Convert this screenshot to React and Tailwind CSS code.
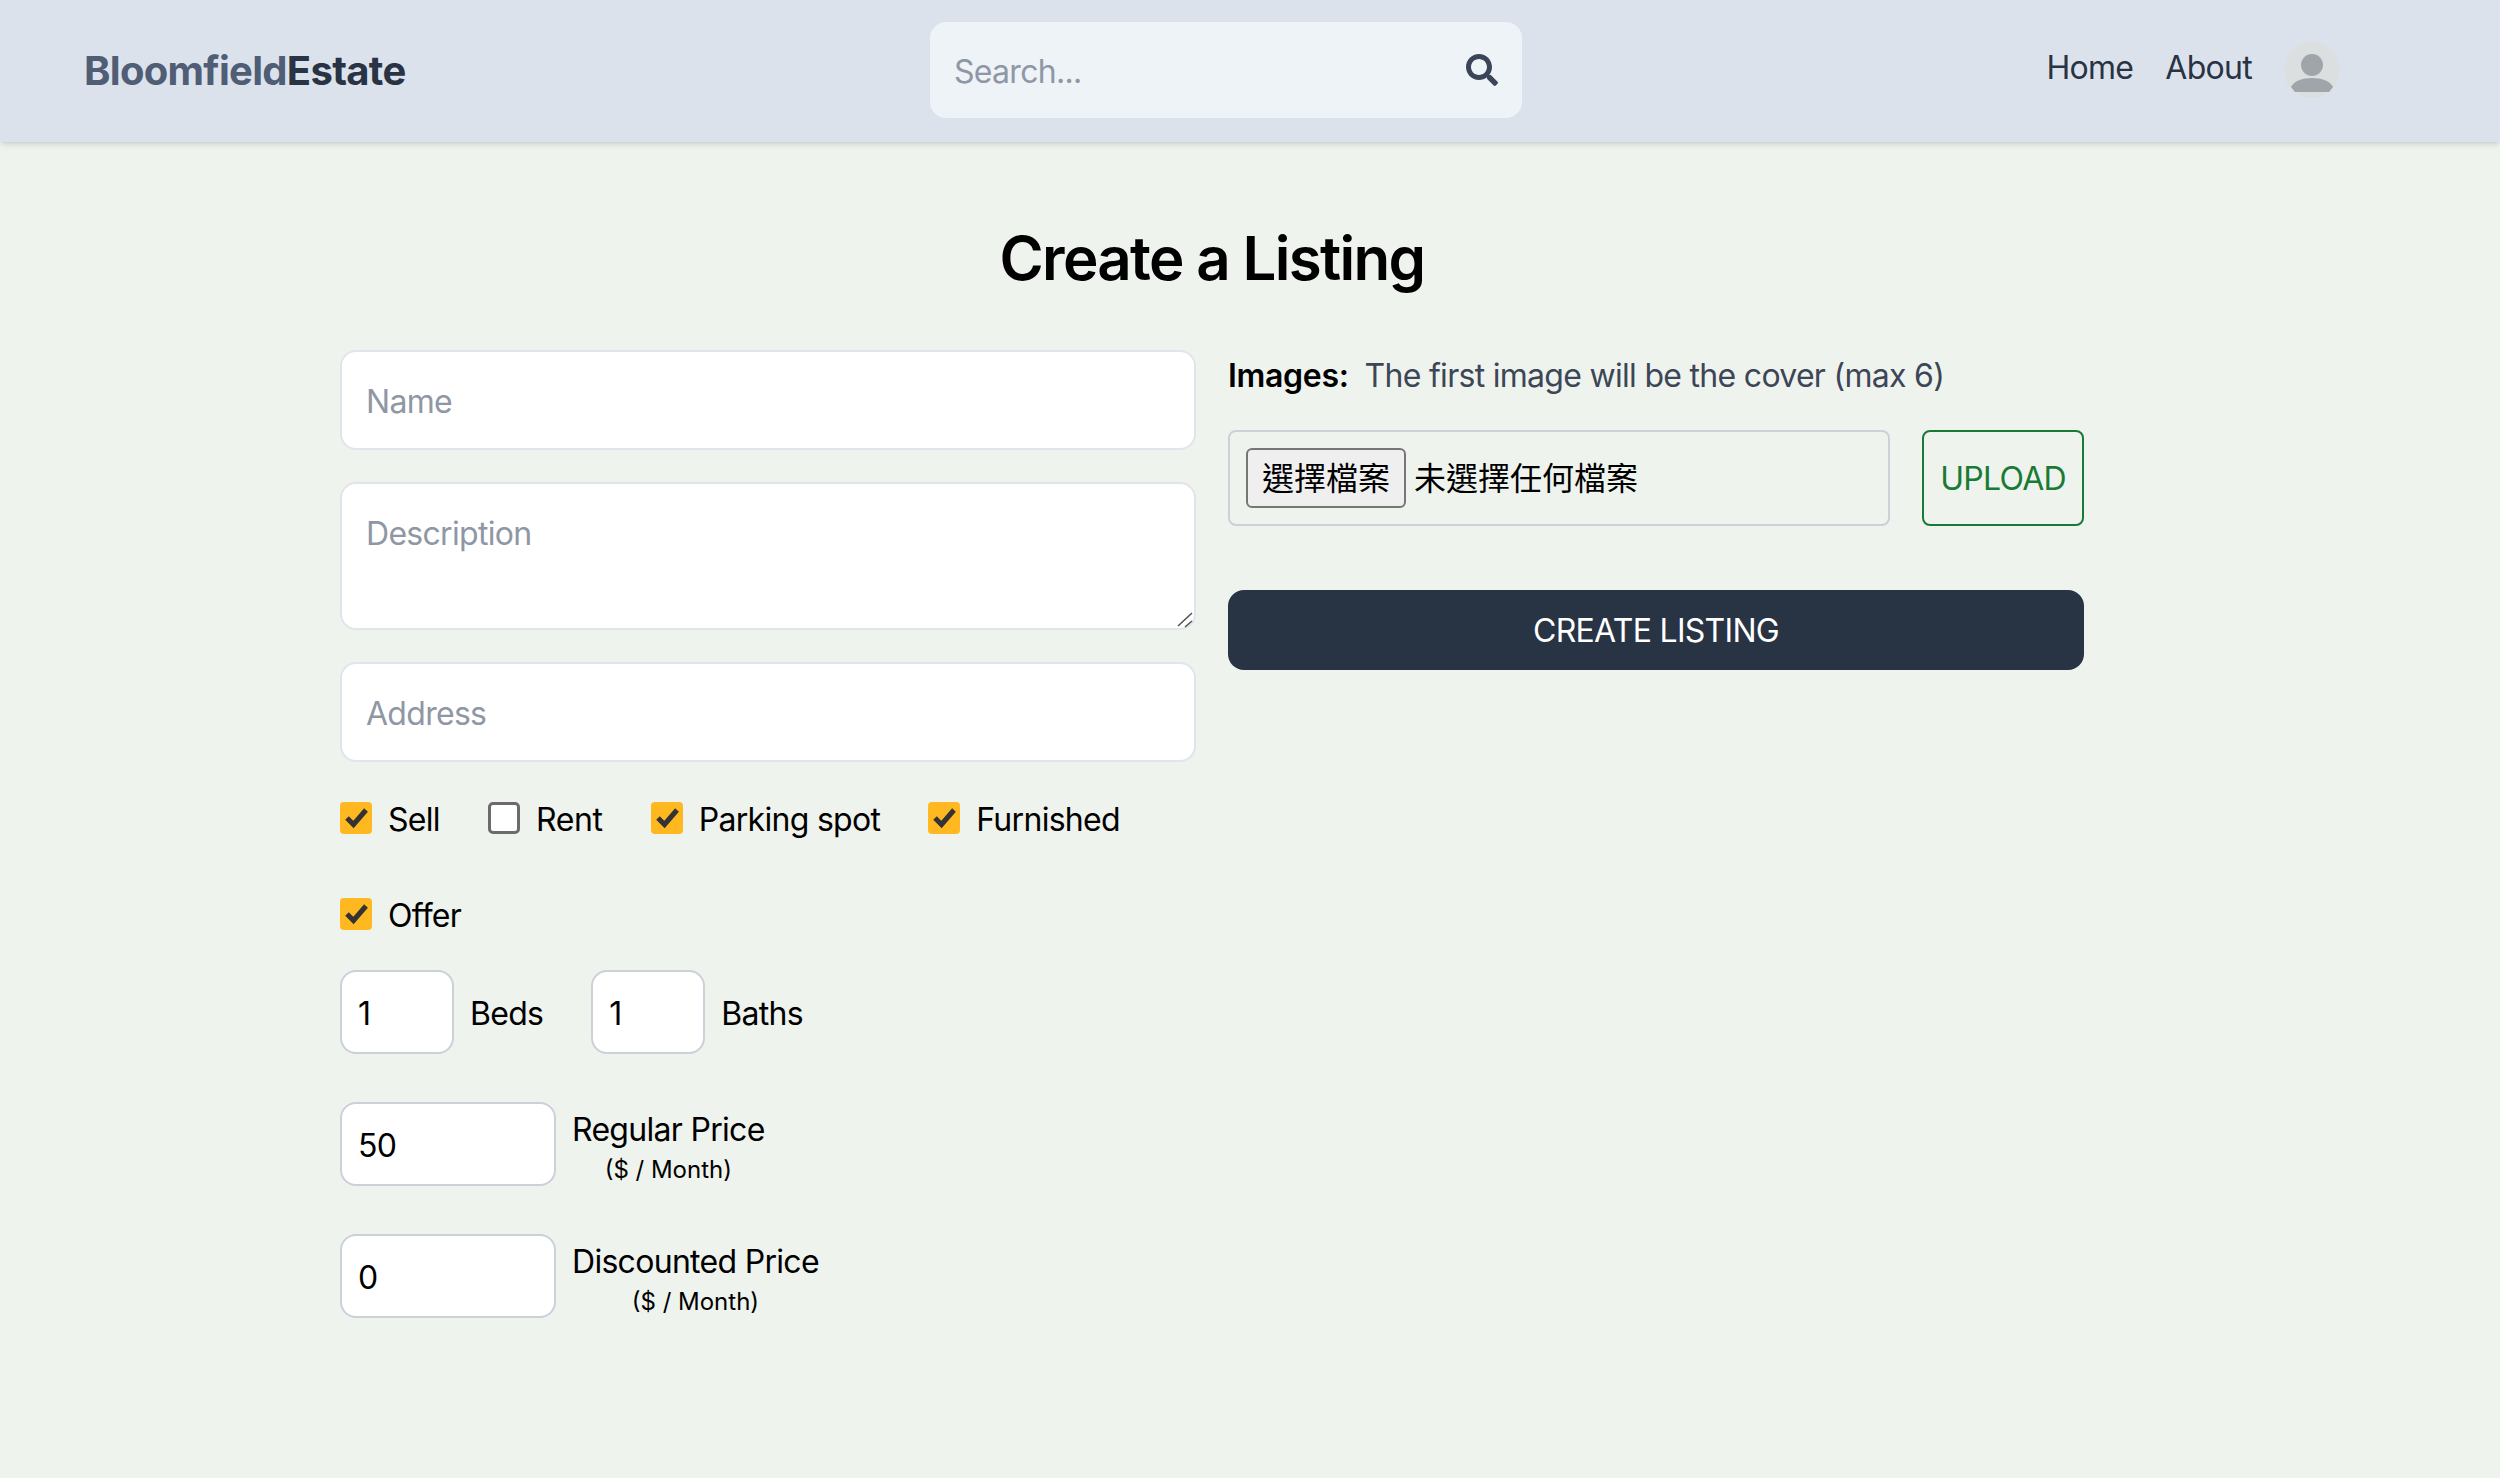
import { FaSearch } from 'react-icons/fa'

const field = 'w-full h-[100px] bg-white border-2 border-[#e1e4ea] rounded-2xl px-6 pt-[2px] text-[32px] text-black outline-none placeholder:text-[#8f97a5]'
const numberField = 'h-[84px] bg-white border-2 border-[#cbd0d9] rounded-2xl px-4 pt-[2px] text-[32px] text-black outline-none'

function Check({ label, checked, labelClass = '' }) {
  return (
    <label className="flex items-center gap-4 h-12">
      <span className="relative w-8 h-8">
        <input
          type="checkbox"
          defaultChecked={checked}
          className="block w-8 h-8 m-0 appearance-none rounded-[5px] bg-white border-[3px] border-[#6b6b6b] checked:bg-[#ffb81f] checked:border-0 checked:rounded"
        />
        {checked && (
          <svg viewBox="0 0 32 32" className="absolute inset-0 w-8 h-8">
            <path d="M7 16l6.5 6.5L26 8" fill="none" stroke="#333" strokeWidth="5" />
          </svg>
        )}
      </span>
      <span className={`pt-[3px] ${labelClass}`}>{label}</span>
    </label>
  )
}

function PriceField({ value, label }) {
  return (
    <div className="flex items-center gap-4">
      <input type="number" defaultValue={value} className={`${numberField} w-[216px]`} />
      <div className="flex flex-col items-center pt-[3px]">
        <p>{label}</p>
        <span className="text-2xl leading-8 tracking-normal">($ / Month)</span>
      </div>
    </div>
  )
}

export default function App() {
  return (
    <div className="min-h-screen bg-[#eff3ee] font-['Inter','Noto_Sans_CJK_TC',sans-serif] text-[32px] leading-[48px] tracking-[-0.022em] text-black">
      <header className="bg-[#dce2ec] shadow-md">
        <div className="w-[2424px]">
          <div className="w-[2304px] mx-auto flex justify-between items-center px-6 pt-[22px] pb-6">
            <h1 className="font-bold text-[40px] leading-[56px] tracking-[-0.7px] pt-[2px]">
              <span className="text-[#4f5d75]">Bloomfield</span>
              <span className="text-[#283344]">Estate</span>
            </h1>
            <form className="flex items-center bg-[#eef3f8] rounded-2xl p-6">
              <input placeholder="Search..." className="w-[512px] h-12 pt-[3px] bg-transparent outline-none text-[32px] placeholder:text-[#8f97a5]" />
              <FaSearch className="w-8 h-8 text-[#3a4558]" />
            </form>
            <nav className="flex items-center gap-8 text-[#283344]">
              <a className="-mt-1">Home</a>
              <a className="-mt-1">About</a>
              <svg viewBox="0 0 56 56" className="w-14 h-14">
                <circle cx="28" cy="28" r="28" fill="#dcdfe0" />
                <circle cx="28" cy="23" r="11" fill="#9fa5a8" />
                <path d="M7 45c3-6 11-9 21-9s18 3 21 9l-4 5H11z" fill="#9fa5a8" />
              </svg>
            </nav>
          </div>
        </div>
      </header>

      <div className="w-[2424px]">
        <main className="w-[1792px] mx-auto p-6">
          <h2 className="text-[60px] leading-[72px] font-semibold tracking-[-0.028em] text-center my-14">Create a Listing</h2>
          <form className="flex gap-8">
            <div className="flex-1 flex flex-col gap-8">
              <input placeholder="Name" className={field} />
              <div className="relative">
                <textarea placeholder="Description" className={`${field} h-[148px] pt-[26px] block leading-[48px] resize-none`} />
                <svg viewBox="0 0 18 16" className="absolute right-[2px] bottom-[2px] w-[18px] h-4">
                  <path d="M2 14L16 1M9 15l7-6" stroke="#555" strokeWidth="1.6" fill="none" />
                </svg>
              </div>
              <input placeholder="Address" className={field} />
              <div className="flex flex-wrap gap-12">
                <Check label="Sell" checked />
                <Check label="Rent" labelClass="tracking-[-0.01em]" />
                <Check label="Parking spot" checked />
                <Check label="Furnished" checked />
                <Check label="Offer" checked />
              </div>
              <div className="flex flex-col gap-12">
                <div className="flex gap-12">
                  <div className="flex items-center gap-4">
                    <input type="number" defaultValue="1" className={`${numberField} w-[114px]`} />
                    <p className="pt-[3px]">Beds</p>
                  </div>
                  <div className="flex items-center gap-4">
                    <input type="number" defaultValue="1" className={`${numberField} w-[114px]`} />
                    <p className="pt-[3px]">Baths</p>
                  </div>
                </div>
                <PriceField value="50" label="Regular Price" />
                <PriceField value="0" label="Discounted Price" />
              </div>
            </div>

            <div className="flex-1 flex flex-col">
              <p className="font-semibold pt-[2px] tracking-[-0.01em]">
                Images:
                <span className="font-normal text-[#3d4656] ml-4 tracking-[-0.022em]">The first image will be the cover (max 6)</span>
              </p>
              <div className="flex gap-8 mt-[30px]">
                <div className="flex-1 h-24 border-2 border-[#cbd0d9] rounded-lg flex items-center pl-[16px]">
                  <button type="button" className="h-[60px] px-[14px] pt-[2px] bg-[#efefef] border-2 border-[#767676] rounded-md text-[32px] leading-none tracking-normal">選擇檔案</button>
                  <span className="ml-[8px] pt-[2px] tracking-normal">未選擇任何檔案</span>
                </div>
                <button type="button" className="h-24 px-4 pt-[2px] border-2 border-[#1a7a35] text-[#1a7a35] rounded-lg uppercase">Upload</button>
              </div>
              <button type="button" className="h-20 mt-16 pt-[2px] bg-[#283344] text-white rounded-2xl uppercase">Create Listing</button>
            </div>
          </form>
        </main>
      </div>
    </div>
  )
}
